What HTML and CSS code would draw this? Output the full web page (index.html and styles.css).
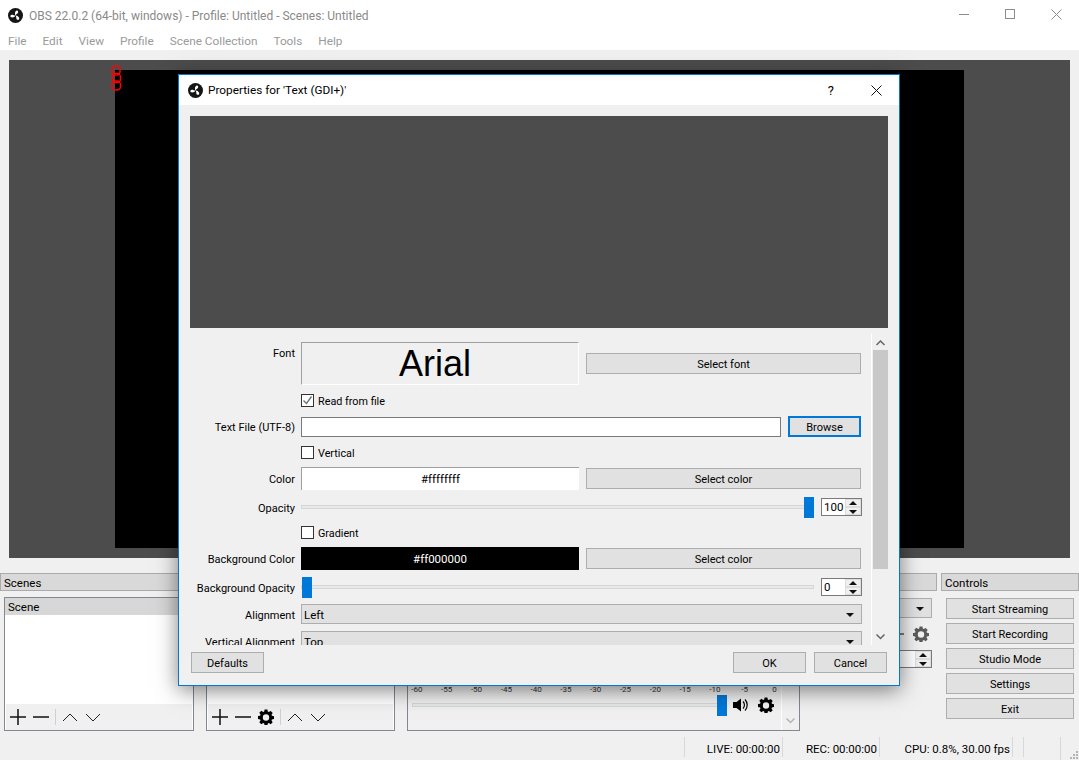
FILE: index.html
```html
<!DOCTYPE html>
<html lang="en">
<head>
  <meta charset="UTF-8">
  <title>OBS 22.0.2</title>
  <link rel="stylesheet" href="styles.css">
</head>
<body>
  <svg class="defs" width="0" height="0">
    <symbol id="logo" viewBox="0 0 16 16">
      <circle cx="8" cy="8" r="8" fill="#151515"/>
      <path d="M8 8C7 6.700 7.200 3.600 9.100 2.700 11 2.500 11.500 4.800 10.100 5.800 9.100 6.200 8.400 7.100 8 8z" fill="#fff"/>
      <path d="M8 8C7 6.700 7.200 3.600 9.100 2.700 11 2.500 11.500 4.800 10.100 5.800 9.100 6.200 8.400 7.100 8 8z" fill="#fff" transform="rotate(120 8 8)"/>
      <path d="M8 8C7 6.700 7.200 3.600 9.100 2.700 11 2.500 11.500 4.800 10.100 5.800 9.100 6.200 8.400 7.100 8 8z" fill="#fff" transform="rotate(240 8 8)"/>
    </symbol>
    <symbol id="gear" viewBox="0 0 16 16">
      <path fill-rule="evenodd" d="M6.600.5h2.800l.4 2.100 1 .5 1.900-1.200 2 2-1.200 1.800.4 1.100 2.100.4v2.800l-2.100.4-.4 1.100 1.200 1.800-2 2-1.900-1.200-1 .4-.4 2.200H6.600l-.4-2.200-1-.4-1.900 1.200-2-2 1.200-1.800-.4-1.100L0 9.900V7.100l2.100-.4.4-1.100-1.200-1.800 2-2 1.900 1.200 1-.5zM8 5.300a3.200 3.200 0 1 0 0 6.400 3.200 3.200 0 0 0 0-6.400z"/>
    </symbol>
  </svg>

  <header class="titlebar">
    <svg class="app-logo"><use href="#logo"/></svg>
    <span class="app-title">OBS 22.0.2 (64-bit, windows) - Profile: Untitled - Scenes: Untitled</span>
    <div class="win-buttons">
      <svg width="11" height="11" viewBox="0 0 11 11"><path d="M0 5.500h10" stroke="#8c8c8c"/></svg>
      <svg width="11" height="11" viewBox="0 0 11 11"><rect x=".5" y=".5" width="9" height="9" fill="none" stroke="#8c8c8c"/></svg>
      <svg width="11" height="11" viewBox="0 0 11 11"><path d="M.5.500l10 10M10.500.5l-10 10" stroke="#8c8c8c"/></svg>
    </div>
  </header>
  <nav class="menubar">
    <span>File</span><span>Edit</span><span>View</span><span>Profile</span><span>Scene Collection</span><span>Tools</span><span>Help</span>
  </nav>

  <main class="preview">
    <div class="canvas"></div>
  </main>

  <section class="docks">
    <div class="dock">
      <h2 class="dock-head">Scenes</h2>
      <div class="panel panel-scenes">
        <div class="list">
          <div class="list-item">Scene</div>
        </div>
        <div class="toolbar">
          <svg class="tool" viewBox="0 0 16 16"><path d="M8 0v16M0 8h16" stroke="#111" stroke-width="1.500"/></svg>
          <svg class="tool" viewBox="0 0 16 16"><path d="M0 8h16" stroke="#111" stroke-width="1.500"/></svg>
          <i class="sep"></i>
          <svg class="tool" viewBox="0 0 16 16"><path d="M1 12l7-7 7 7" fill="none" stroke="#222"/></svg>
          <svg class="tool" viewBox="0 0 16 16"><path d="M1 5l7 7 7-7" fill="none" stroke="#222"/></svg>
        </div>
      </div>
    </div>
    <div class="dock">
      <h2 class="dock-head"></h2>
      <div class="panel">
        <div class="list"></div>
        <div class="toolbar">
          <svg class="tool" viewBox="0 0 16 16"><path d="M8 0v16M0 8h16" stroke="#111" stroke-width="1.500"/></svg>
          <svg class="tool" viewBox="0 0 16 16"><path d="M0 8h16" stroke="#111" stroke-width="1.500"/></svg>
          <svg class="tool"><use href="#gear"/></svg>
          <i class="sep"></i>
          <svg class="tool" viewBox="0 0 16 16"><path d="M1 12l7-7 7 7" fill="none" stroke="#222"/></svg>
          <svg class="tool" viewBox="0 0 16 16"><path d="M1 5l7 7 7-7" fill="none" stroke="#222"/></svg>
        </div>
      </div>
    </div>
    <div class="dock">
      <h2 class="dock-head"></h2>
      <div class="panel mixer">
        <div class="mixer-main">
          <div class="ticks">
            <span>-60</span><span>-55</span><span>-50</span><span>-45</span><span>-40</span><span>-35</span><span>-30</span><span>-25</span><span>-20</span><span>-15</span><span>-10</span><span>-5</span><span>0</span>
          </div>
          <div class="volume">
            <div class="track volume-track"><b class="thumb thumb-end"></b></div>
            <svg class="speaker" viewBox="0 0 16 16"><path d="M0 5h3.500L8 1.500v13L3.500 11H0z"/><path d="M10 4.500a5 5 0 0 1 0 7M12 2.500a8 8 0 0 1 0 11" fill="none" stroke="#000" stroke-width="1.200"/></svg>
            <svg class="tool"><use href="#gear"/></svg>
          </div>
        </div>
        <div class="mixer-scroll">
          <svg width="9" height="6" viewBox="0 0 9 6"><path d="M.5.500l4 4 4-4" fill="none" stroke="#b5b5b5" stroke-width="1.500"/></svg>
        </div>
      </div>
    </div>
    <div class="dock dock-trans">
      <h2 class="dock-head"></h2>
      <div class="transitions">
        <div class="combo"><span></span><i class="caret"></i></div>
        <div class="trans-tools">
          <svg class="tool" viewBox="0 0 16 16"><path d="M0 8h16" stroke="#555" stroke-width="1.500"/></svg>
          <svg class="tool tool-gray"><use href="#gear"/></svg>
        </div>
        <div class="spin"><span></span><div class="spin-btns"><i class="up"></i><i class="down"></i></div></div>
      </div>
    </div>
    <div class="dock dock-controls">
      <h2 class="dock-head">Controls</h2>
      <div class="controls">
        <button class="btn">Start Streaming</button>
        <button class="btn">Start Recording</button>
        <button class="btn">Studio Mode</button>
        <button class="btn">Settings</button>
        <button class="btn">Exit</button>
      </div>
    </div>
  </section>

  <footer class="statusbar">
    <span class="st st-live">LIVE: 00:00:00</span>
    <span class="st st-rec">REC: 00:00:00</span>
    <span class="st st-cpu">CPU: 0.8%, 30.00 fps</span>
    <span class="st st-blank"></span>
    <span class="st st-empty"></span>
    <span class="st st-grip">
      <svg width="10" height="10" viewBox="0 0 10 10" fill="#b4b4b4"><rect x="7" y="1" width="2" height="2"/><rect x="4" y="4" width="2" height="2"/><rect x="7" y="4" width="2" height="2"/><rect x="1" y="7" width="2" height="2"/><rect x="4" y="7" width="2" height="2"/><rect x="7" y="7" width="2" height="2"/></svg>
    </span>
  </footer>

  <!-- red outline of the empty text source, drawn on the canvas -->
  <svg class="source-box" width="11" height="26" viewBox="0 0 11 26" fill="none" stroke="#f00" stroke-width="1.500">
    <rect x="1" y="1" width="8" height="9" rx="3.500"/>
    <rect x="1.500" y="8.500" width="8" height="9" rx="3.500"/>
    <rect x="1" y="16" width="8.500" height="9" rx="3.500"/>
  </svg>

  <!-- dialog over the main window -->
  <div class="dialog">
    <div class="dlg-title">
      <svg class="dlg-logo"><use href="#logo"/></svg>
      <span class="dlg-name">Properties for 'Text (GDI+)'</span>
      <span class="dlg-help">?</span>
      <svg class="dlg-close" width="11" height="11" viewBox="0 0 11 11"><path d="M.5.500l10 10M10.500.5l-10 10" stroke="#111"/></svg>
    </div>
    <div class="dlg-body">
      <div class="dlg-preview"></div>
      <div class="props">
        <div class="form">
          <div class="row row-font">
            <label class="lab lab-top">Font</label>
            <div class="font-box">Arial</div>
            <button class="btn side-btn">Select font</button>
          </div>
          <div class="row row-check">
            <span></span>
            <div class="check-wrap">
              <span class="check"><svg width="11" height="11" viewBox="0 0 11 11"><path d="M1.500 5.500l3 3 5-7" fill="none" stroke="#707070" stroke-width="1.400"/></svg></span>
              <span class="check-label">Read from file</span>
            </div>
          </div>
          <div class="row row-file">
            <label class="lab">Text File (UTF-8)</label>
            <div class="input"></div>
            <button class="btn btn-browse side-btn">Browse</button>
          </div>
          <div class="row row-check-s">
            <span></span>
            <div class="check-wrap"><span class="check"></span><span class="check-label">Vertical</span></div>
          </div>
          <div class="row row-color">
            <label class="lab">Color</label>
            <div class="swatch swatch-white">#ffffffff</div>
            <button class="btn side-btn">Select color</button>
          </div>
          <div class="row row-slider">
            <label class="lab">Opacity</label>
            <div class="track"><b class="thumb thumb-end"></b></div>
            <div class="spin"><span>100</span><div class="spin-btns"><i class="up"></i><i class="down"></i></div></div>
          </div>
          <div class="row row-check-s">
            <span></span>
            <div class="check-wrap"><span class="check"></span><span class="check-label">Gradient</span></div>
          </div>
          <div class="row row-color">
            <label class="lab">Background Color</label>
            <div class="swatch swatch-black">#ff000000</div>
            <button class="btn side-btn">Select color</button>
          </div>
          <div class="row row-slider">
            <label class="lab">Background Opacity</label>
            <div class="track"><b class="thumb"></b></div>
            <div class="spin"><span>0</span><div class="spin-btns"><i class="up"></i><i class="down"></i></div></div>
          </div>
          <div class="row row-combo">
            <label class="lab">Alignment</label>
            <div class="combo"><span>Left</span><i class="caret"></i></div>
          </div>
          <div class="row row-combo">
            <label class="lab">Vertical Alignment</label>
            <div class="combo"><span>Top</span><i class="caret"></i></div>
          </div>
        </div>
        <div class="scrollbar">
          <svg width="9" height="6" viewBox="0 0 9 6"><path d="M.5 5l4-4 4 4" fill="none" stroke="#666" stroke-width="1.500"/></svg>
          <div class="scroll-thumb"></div>
          <svg class="scroll-down" width="9" height="6" viewBox="0 0 9 6"><path d="M.5.500l4 4 4-4" fill="none" stroke="#666" stroke-width="1.500"/></svg>
        </div>
      </div>
      <div class="dlg-actions">
        <button class="btn">Defaults</button>
        <span class="grow"></span>
        <button class="btn">OK</button>
        <button class="btn">Cancel</button>
      </div>
    </div>
  </div>
</body>
</html>
```

FILE: styles.css
```css
* { box-sizing: border-box; margin: 0; padding: 0; }
html, body { height: 100%; }
body {
  width: 1079px;
  height: 760px;
  overflow: hidden;
  position: relative;
  background: #f0f0f0;
  color: #000;
  font: 11px Roboto, "Liberation Sans", sans-serif;
}
.defs { position: absolute; }
button { font: inherit; color: inherit; }

.titlebar { height: 30px; background: #fff; display: flex; align-items: center; padding-left: 8px; }
.app-logo { width: 15px; height: 15px; margin-right: 6px; }
.app-title { color: #8a8a8a; font-size: 12px; padding-top: 1px; }
.win-buttons { margin-left: auto; display: flex; gap: 35px; padding: 0 17px 2px 0; }
.menubar { height: 20px; background: #fff; display: flex; gap: 16px; padding: 2px 0 0 8px; color: #9a9a9a; font-size: 11.800px; align-items: center; }

.preview { margin: 10px 9px 0; height: 498px; background: #4c4c4c; display: flex; align-items: center; justify-content: center; }
.canvas { width: 849px; height: 478px; background: #000; }

.docks { display: grid; grid-template-columns: 206px 201px 405px 129px 138px; margin-top: 15px; }
.dock { padding-right: 12px; }
.dock-trans { padding-right: 4px; }
.dock-controls { padding-right: 0; }
.dock-head { height: 18px; background: #d9d9d9; border: 1px solid #ababab; font-size: 11.500px; font-weight: 400; line-height: 18px; padding-left: 3px; }
.panel { margin-top: 6px; height: 134px; border: 1px solid #828790; background: #fff; display: flex; flex-direction: column; }
.panel-scenes { margin-left: 4px; }
.list { flex: 1; }
.list-item { height: 17px; background: #d7d7d7; line-height: 18px; padding-left: 3px; font-size: 11.500px; }
.toolbar { height: 26px; margin: 0 1px; background: #f0f0f0; display: flex; align-items: center; gap: 7px; padding-left: 4px; }
.tool { width: 16px; height: 16px; flex: none; }
.tool-gray { fill: #5a5a5a; }
.sep { width: 1px; height: 16px; background: #d0d0d0; margin: 0 -1px; }

.mixer { flex-direction: row; background: #f0f0f0; }
.mixer-main { flex: 1; min-width: 0; padding: 85px 3px 0 4px; }
.ticks { display: flex; height: 11px; margin-left: -10px; font-size: 8px; color: #333; line-height: 14px; }
.ticks span { flex: none; width: 29.800px; text-align: center; }
.volume { display: flex; align-items: center; gap: 6px; height: 21px; }
.volume-track { width: 315px; flex: none; }
.speaker { width: 16px; height: 16px; margin-right: 3px; }
.mixer-scroll { width: 18px; flex: none; border-left: 1px solid #fff; display: flex; justify-content: center; align-items: flex-end; padding-bottom: 6px; }

.transitions { padding: 7px 5px 0 0; display: flex; flex-direction: column; }
.trans-tools { height: 32px; display: flex; align-items: center; justify-content: flex-end; gap: 9px; padding-right: 3px; }

.controls { display: flex; flex-direction: column; gap: 4px; padding: 7px 5px 0; }
.btn { height: 21px; background: #e1e1e1; border: 1px solid #adadad; border-radius: 0; text-align: center; padding-top: 1px; }

.statusbar { position: absolute; left: 0; right: 0; bottom: 0; height: 23px; display: flex; justify-content: flex-end; font-size: 11.500px; }
.st { height: 20px; line-height: 24px; border-left: 1px solid #d8d8d8; padding-right: 2px; text-align: right; }
.st-live { width: 98px; }
.st-rec { width: 97px; }
.st-cpu { width: 133px; }
.st-blank { width: 11px; }
.st-empty { width: 37px; }
.st-grip { width: 19px; height: 23px; padding: 13px 0 0 8px; line-height: 0; }

.source-box { position: absolute; left: 110.500px; top: 65px; }

.dialog { position: absolute; left: 178px; top: 74px; width: 722px; height: 612px; border: 1px solid #0078d7; background: #f0f0f0; box-shadow: 0 4px 20px rgba(0, 0, 0, .5); }
.dlg-title { height: 30px; background: #fff; display: flex; align-items: center; padding-left: 9px; }
.dlg-logo { width: 15px; height: 15px; margin-right: 5px; }
.dlg-name { font-size: 11.800px; padding-bottom: 1px; }
.dlg-help { margin-left: auto; margin-right: 37px; font-size: 13px; }
.dlg-close { margin-right: 17px; }
.dlg-body { padding: 11px 11px 0; }
.dlg-preview { height: 212px; background: #4c4c4c; }
.props { height: 311px; margin-top: 6px; display: flex; overflow: hidden; }
.form { flex: 1; padding: 8px 9px 0 0; display: flex; flex-direction: column; gap: 6px; }
.row { display: grid; grid-template-columns: 105px 1fr; column-gap: 6px; align-items: center; flex: none; }
.lab { text-align: right; padding-top: 2px; }
.lab-top { align-self: start; padding-top: 5px; }
.row-font { height: 43px; grid-template-columns: 105px 278px 1fr; }
.row-check { height: 19px; }
.row-check-s { height: 18px; }
.row-file { height: 21px; grid-template-columns: 105px 480px 1fr; }
.row-color { height: 23px; grid-template-columns: 105px 278px 1fr; }
.row-slider { height: 21px; grid-template-columns: 105px 513px 1fr; }
.row-slider .lab { padding-top: 3px; }
.row-slider .spin { margin-left: 1px; }
.row-combo { height: 21px; align-items: end; }
.row-combo .lab { padding: 0 0 2px; }
.font-box { height: 43px; background: #f0f0f0; border: 1px solid #fff; border-top-color: #a0a0a0; border-left-color: #a0a0a0; color: #000; padding-right: 10px; text-align: center; font: 36px/42px "Liberation Sans", sans-serif; }
.side-btn { margin: 0 1px; }
.check-wrap { display: flex; align-items: flex-start; align-self: start; gap: 4px; padding-top: 3px; font-size: 10.800px; }
.check { width: 13px; height: 13px; flex: none; border: 1px solid #333; background: #fff; display: flex; align-items: center; justify-content: center; }
.check-label { line-height: 13px; padding-top: 1px; }
.input { height: 20px; background: #fff; border: 1px solid #7a7a7a; }
.btn-browse { border: 2px solid #0078d7; }
.swatch { height: 23px; text-align: center; line-height: 24px; font-size: 11.500px; }
.swatch-white { background: #fff; border-top: 1px solid #a0a0a0; border-left: 1px solid #a0a0a0; line-height: 22px; }
.swatch-black { background: #000; color: #fff; }
.track { height: 4px; background: #e7eaea; border: 1px solid #d6d6d6; position: relative; }
.thumb { position: absolute; left: 0; top: -9px; width: 10px; height: 21px; background: #0078d7; }
.thumb-end { left: auto; right: -1px; }
.spin { height: 18px; border: 1px solid #7a7a7a; background: #fff; display: flex; justify-content: space-between; align-items: center; padding-left: 2px; font-size: 11.500px; }
.spin-btns { width: 16px; height: 16px; background: #f0f0f0; display: flex; flex-direction: column; }
.spin-btns i { flex: 1; position: relative; border: 1px solid #ddd; }
.spin-btns i::after { content: ""; position: absolute; left: 3px; border: 4px solid transparent; border-top-width: 0; border-bottom: 4px solid #111; top: 1px; }
.spin-btns .down::after { border-bottom-width: 0; border-top: 4px solid #111; top: 2px; }
.combo { height: 20px; background: #e1e1e1; border: 1px solid #adadad; display: flex; justify-content: space-between; align-items: center; padding: 1px 5px 0 2px; font-size: 11.500px; }
.caret { width: 0; height: 0; border: 4px solid transparent; border-bottom-width: 0; border-top: 4px solid #111; margin-right: 2px; }
.scrollbar { width: 17px; border-left: 1px solid #fff; display: flex; flex-direction: column; align-items: center; padding-top: 6px; }
.scroll-thumb { width: 15px; height: 219px; background: #c8c8c8; margin-top: 4px; }
.scroll-down { margin-top: auto; margin-bottom: 5px; }
.dlg-actions { display: flex; gap: 8px; margin-top: 7px; padding: 0 1px; }
.dlg-actions .btn { width: 73px; }
.grow { flex: 1; }
```
